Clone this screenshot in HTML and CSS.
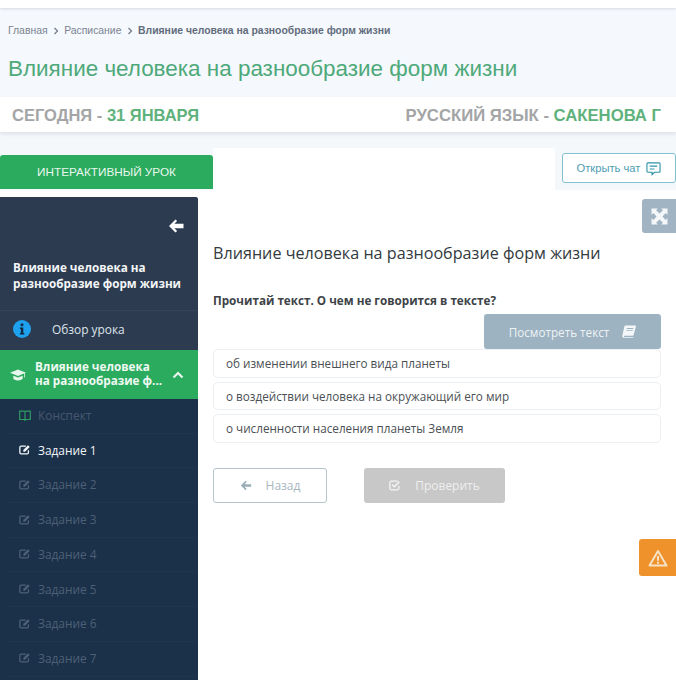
FILE: index.html
```html
<!DOCTYPE html>
<html lang="ru">
<head>
<meta charset="utf-8">
<title>Влияние человека на разнообразие форм жизни</title>
<link rel="stylesheet" href="styles.css">
</head>
<body>
<div class="page">
  <div class="topbar"></div>
  <header class="head">
    <nav class="crumbs">
      <span>Главная</span>
      <svg class="chev" viewBox="0 0 6 8"><path d="M1.500 1l3 3-3 3" fill="none" stroke="#6f7a88" stroke-width="1.200"/></svg>
      <span>Расписание</span>
      <svg class="chev" viewBox="0 0 6 8"><path d="M1.500 1l3 3-3 3" fill="none" stroke="#6f7a88" stroke-width="1.200"/></svg>
      <b>Влияние человека на разнообразие форм жизни</b>
    </nav>
    <h1 class="title">Влияние человека на разнообразие форм жизни</h1>
  </header>
  <section class="today">
    <div>СЕГОДНЯ - <em>31 ЯНВАРЯ</em></div>
    <div class="subject">РУССКИЙ ЯЗЫК - <em>САКЕНОВА Г</em></div>
  </section>
  <div class="tabs">
    <div class="tab">ИНТЕРАКТИВНЫЙ УРОК</div>
    <div class="tabfill"></div>
    <div class="chatcell">
      <button class="chat">Открыть чат
        <svg class="chaticon" viewBox="0 0 16 16"><path d="M2 2h12a1 1 0 0 1 1 1v8a1 1 0 0 1-1 1H9l-2.500 2.500V12H2a1 1 0 0 1-1-1V3a1 1 0 0 1 1-1z" fill="none" stroke="#2f93a8" stroke-width="1.200"/><path d="M4 5.500h8M4 8.500h5" stroke="#2f93a8" stroke-width="1.200"/></svg>
      </button>
    </div>
  </div>
  <div class="body">
    <aside class="side">
      <div class="sidehead">
        <div class="backrow">
          <svg class="back" viewBox="0 0 16 14"><path d="M7.500 0.500L1 7l6.500 6.500 1.600-1.600L6.400 9.200H15.500V4.800H6.400l2.700-2.700z" fill="#fff"/></svg>
        </div>
        <div class="sidetitle">Влияние человека на разнообразие форм жизни</div>
      </div>
      <div class="overview">
        <svg class="info" viewBox="0 0 18 18"><circle cx="9" cy="9" r="9" fill="#1ea1ee"/><path d="M9 3.200a1.500 1.500 0 1 1 0 3 1.500 1.500 0 0 1 0-3zM6.900 7.600h3.400v5.400h1v1.500H6.900V13h1v-3.900h-1z" fill="#14293f"/></svg>
        <span>Обзор урока</span>
      </div>
      <div class="active">
        <svg class="cap" viewBox="0 0 16 12"><path d="M8 0.500L0 3.700l8 3.200 6-2.400v4h.8V4.200l1.200-.5zM3.300 6.700v2.900c0 .6 2 1.900 4.700 1.900s4.700-1.300 4.700-1.900V6.700L8 8.500z" fill="#e8f7ee"/></svg>
        <div class="activetext">Влияние человека<br>на разнообразие ф...</div>
        <svg class="up" viewBox="0 0 12 8"><path d="M1.500 6.500L6 2l4.500 4.500" fill="none" stroke="#e9f7ee" stroke-width="2.200"/></svg>
      </div>
      <ul class="items">
        <li class="item green">
          <svg class="ico" viewBox="0 0 12 11"><path d="M.7 1.200h4.300l1 .6 1-.6h4.300v8.300H7l-1 .7-1-.7H.7zM6 1.800v8.400" fill="none" stroke="#2f9c62" stroke-width="1.200"/></svg>
          <span>Конспект</span>
        </li>
        <li class="item on">
          <svg class="ico" viewBox="0 0 14 12"><path d="M11 7v2.500a1.500 1.500 0 0 1-1.500 1.500h-7A1.500 1.500 0 0 1 1 9.500v-6A1.500 1.500 0 0 1 2.500 2H8" fill="none" stroke="currentColor" stroke-width="1.500"/><path d="M5 6.500L10.500 1l2 2L7 8.500H5z" fill="currentColor"/></svg>
          <span>Задание 1</span>
        </li>
        <li class="item">
          <svg class="ico" viewBox="0 0 14 12"><path d="M11 7v2.500a1.500 1.500 0 0 1-1.500 1.500h-7A1.500 1.500 0 0 1 1 9.500v-6A1.500 1.500 0 0 1 2.500 2H8" fill="none" stroke="currentColor" stroke-width="1.500"/><path d="M5 6.500L10.500 1l2 2L7 8.500H5z" fill="currentColor"/></svg>
          <span>Задание 2</span>
        </li>
        <li class="item">
          <svg class="ico" viewBox="0 0 14 12"><path d="M11 7v2.500a1.500 1.500 0 0 1-1.500 1.500h-7A1.500 1.500 0 0 1 1 9.500v-6A1.500 1.500 0 0 1 2.500 2H8" fill="none" stroke="currentColor" stroke-width="1.500"/><path d="M5 6.500L10.500 1l2 2L7 8.500H5z" fill="currentColor"/></svg>
          <span>Задание 3</span>
        </li>
        <li class="item">
          <svg class="ico" viewBox="0 0 14 12"><path d="M11 7v2.500a1.500 1.500 0 0 1-1.500 1.500h-7A1.500 1.500 0 0 1 1 9.500v-6A1.500 1.500 0 0 1 2.500 2H8" fill="none" stroke="currentColor" stroke-width="1.500"/><path d="M5 6.500L10.500 1l2 2L7 8.500H5z" fill="currentColor"/></svg>
          <span>Задание 4</span>
        </li>
        <li class="item">
          <svg class="ico" viewBox="0 0 14 12"><path d="M11 7v2.500a1.500 1.500 0 0 1-1.500 1.500h-7A1.500 1.500 0 0 1 1 9.500v-6A1.500 1.500 0 0 1 2.500 2H8" fill="none" stroke="currentColor" stroke-width="1.500"/><path d="M5 6.500L10.500 1l2 2L7 8.500H5z" fill="currentColor"/></svg>
          <span>Задание 5</span>
        </li>
        <li class="item">
          <svg class="ico" viewBox="0 0 14 12"><path d="M11 7v2.500a1.500 1.500 0 0 1-1.500 1.500h-7A1.500 1.500 0 0 1 1 9.500v-6A1.500 1.500 0 0 1 2.500 2H8" fill="none" stroke="currentColor" stroke-width="1.500"/><path d="M5 6.500L10.500 1l2 2L7 8.500H5z" fill="currentColor"/></svg>
          <span>Задание 6</span>
        </li>
        <li class="item">
          <svg class="ico" viewBox="0 0 14 12"><path d="M11 7v2.500a1.500 1.500 0 0 1-1.500 1.500h-7A1.500 1.500 0 0 1 1 9.500v-6A1.500 1.500 0 0 1 2.500 2H8" fill="none" stroke="currentColor" stroke-width="1.500"/><path d="M5 6.500L10.500 1l2 2L7 8.500H5z" fill="currentColor"/></svg>
          <span>Задание 7</span>
        </li>
      </ul>
    </aside>
    <main class="content">
      <h2 class="lesson">Влияние человека на разнообразие форм жизни</h2>
      <p class="question">Прочитай текст. О чем не говорится в тексте?</p>
      <div class="viewrow">
        <button class="view">Посмотреть текст
          <svg class="book" viewBox="0 0 14 13"><path fill-rule="evenodd" d="M3.500 0.500H13.200c.6 0 .8.400.7 1L11.600 10c-.1.500-.4.800-.9.800H2.600c-.9 0-.9 1.100 0 1.100h8.700v.9H2.200C.6 12.800 0 11.600.4 10.200L2.400 1.600c.2-.7.500-1.100 1.100-1.100zM4.800 3v.9h6.300l.2-.9zM4.300 5.200v.9h6.300l.2-.9z" fill="#f4f7f9"/></svg>
        </button>
      </div>
      <div class="answers">
        <div class="answer">об изменении внешнего вида планеты</div>
        <div class="answer">о воздействии человека на окружающий его мир</div>
        <div class="answer">о численности населения планеты Земля</div>
      </div>
      <div class="actions">
        <button class="btn prev">
          <svg class="btnicon" viewBox="0 0 14 12"><path d="M6.500 0.500L1 6l5.500 5.500 1.300-1.300L5.400 7.600H13V4.400H5.400l2.400-2.600z" fill="#9aaeb8"/></svg>
          Назад
        </button>
        <button class="btn check">
          <svg class="btnicon" viewBox="0 0 14 12"><path d="M11.500 6.500v2.800A1.700 1.700 0 0 1 9.800 11H2.700A1.700 1.700 0 0 1 1 9.300V2.700A1.700 1.700 0 0 1 2.700 1h7.600" fill="none" stroke="#f3f3f3" stroke-width="1.500"/><path d="M3.700 5l2.500 2.500L12 1.800" fill="none" stroke="#f3f3f3" stroke-width="1.800"/></svg>
          Проверить
        </button>
      </div>
    </main>
    <button class="expand" aria-label="Развернуть">
      <svg viewBox="0 0 16 16"><path d="M0.500 0.500h6L4.800 2.200 8 5.200l3.200-3-1.700-1.700h6v6l-1.700-1.700-3 3.200 3 3.200 1.700-1.700v6h-6l1.700-1.700-3.200-3-3.200 3 1.700 1.700h-6v-6l1.700 1.700 3-3.200-3-3.200-1.700 1.700z" fill="#f4f6f8"/></svg>
    </button>
    <button class="warn" aria-label="Предупреждение">
      <svg viewBox="0 0 20 18"><path d="M10 2L1.500 16.500h17z" fill="none" stroke="#f6e3c6" stroke-width="2" stroke-linejoin="round"/><path d="M10 7v4.800M10 12.800v2" stroke="#f6e3c6" stroke-width="2"/></svg>
    </button>
  </div>
</div>
</body>
</html>
```
FILE: styles.css
```css
* { box-sizing: border-box; }
html, body { margin: 0; padding: 0; }
body { background: #fff; font-family: "Open Sans", sans-serif; overflow: hidden; }
.page { width: 676px; height: 680px; overflow: hidden; display: flex; flex-direction: column; }
.topbar { height: 8px; background: #fff; box-shadow: 0 1px 3px rgba(120,130,150,.25); position: relative; }
.head { height: 89px; background: #f5f8fc; padding: 17px 8px 0; }
.crumbs { display: flex; align-items: center; font: 10.400px/12px "Liberation Sans", sans-serif; color: #7b8491; height: 12px; }
.crumbs b { color: #626c7d; }
.chev { width: 6px; height: 8px; margin: 0 5.300px 0 5.300px; }
.title { margin: 19px 0 0; font: 400 22.450px/26px "Liberation Sans", sans-serif; color: #4ea97a; }
.today { height: 35px; background: #fff; display: flex; justify-content: space-between; align-items: center; padding: 0 15px 0 12px; font: 700 16.500px/20px "Liberation Sans", sans-serif; color: #a3a5a6; box-shadow: 0 2px 4px rgba(120,130,150,.2); position: relative; }
.today em { font-style: normal; color: #5fb27c; }
.subject { font-size: 16.700px; padding-top: 2px; }
.tabs { height: 58px; background: #f5f8fb; display: flex; align-items: flex-end; padding-top: 16px; }
.tab { width: 213px; height: 34px; background: #2bab5e; color: #e9f7ee; border-radius: 3px 3px 0 0; font: 11.750px/34px "Liberation Sans", sans-serif; text-align: center; margin-bottom: 1px; }
.tabfill { width: 342px; height: 42px; background: #fff; border-radius: 0 3px 0 0; }
.chatcell { flex: 1; height: 42px; display: flex; justify-content: flex-end; padding-top: 5px; }
.chat { width: 114px; height: 30px; background: #fff; border: 1px solid #7fc1d1; border-radius: 3px; color: #4d9db2; font: 11.200px "Liberation Sans", sans-serif; display: flex; align-items: center; justify-content: center; gap: 6px; padding: 0; }
.chaticon { width: 15px; height: 15px; }
.body { flex: 1; display: flex; position: relative; background: #fff; padding-top: 7px; }
.side { width: 198px; background: #1b3049; border-radius: 0 3px 0 0; color: #fff; flex: none; }
.sidehead { height: 114px; background: #2c3b50; padding: 0 13px; border-bottom: 1px solid #354558; border-radius: 0 3px 0 0; }
.backrow { display: flex; justify-content: flex-end; padding: 22px 1px 0 0; height: 62px; }
.back { width: 16px; height: 14px; }
.sidetitle { font-weight: 700; font-size: 11.700px; line-height: 16px; color: #f3f5f7; }
.overview { height: 39px; background: #2c3b50; display: flex; align-items: center; padding: 0 13px 3px; color: #dfe4ea; font-size: 11.900px; }
.info { width: 18px; height: 18px; margin-right: 21px; flex: none; }
.active { height: 49px; background: #2bab5e; display: flex; align-items: center; padding: 0 14px 0 10px; color: #eef9f2; }
.cap { width: 16px; height: 12px; flex: none; margin-right: 9px; }
.activetext { flex: 1; font-weight: 700; font-size: 11.700px; line-height: 14px; white-space: nowrap; padding-bottom: 4px; }
.up { width: 12px; height: 8px; flex: none; }
.items { list-style: none; margin: 0; padding: 0 0 0 7px; }
.item { height: 34.700px; display: flex; align-items: center; padding: 0 0 1.500px 12px; font-size: 11.900px; color: #4d6075; border-bottom: 1px solid #1f354e; }
.item .ico { width: 12px; height: 11px; margin-right: 7px; flex: none; }
.item.on { color: #f2f5f8; }
.item.green span { color: #46596e; }
.content { flex: 1; padding: 46px 15px 0; min-width: 0; }
.lesson { margin: 0; font-weight: 400; font-size: 16.170px; line-height: 20px; color: #333a40; }
.question { margin: 29px 0 0; font-weight: 700; font-size: 11.700px; line-height: 16px; color: #3d4347; }
.viewrow { display: flex; justify-content: flex-end; margin-top: 6px; }
.view { width: 177px; height: 35px; border: 0; background: #9db3c1; color: #eef2f5; border-radius: 3px; font: 11.700px "Open Sans", sans-serif; display: flex; align-items: center; justify-content: center; gap: 13px; padding: 0; }
.book { width: 14px; height: 13px; }
.answers { display: flex; flex-direction: column; gap: 4px; }
.answer { height: 28.700px; border: 1px solid #eceff1; border-radius: 5px; padding: 0 12px; font-size: 11.700px; line-height: 26.700px; color: #4b5054; background: #fff; }
.actions { display: flex; gap: 37px; margin-top: 25px; }
.btn { width: 114px; height: 35px; border-radius: 3px; font: 12px "Open Sans", sans-serif; display: flex; align-items: center; justify-content: center; gap: 14px; padding: 0; }
.prev { border: 1px solid #b6c4cb; background: #fff; color: #a9b8c0; }
.check { width: 141px; border: 0; background: #c8c8c8; color: #eeeeee; }
.btnicon { width: 12px; height: 11px; }
.expand { position: absolute; right: 0; top: 9px; width: 34px; height: 34px; border: 0; padding: 0; background: #a0b4c3; border-radius: 3px 0 0 3px; display: flex; align-items: center; justify-content: center; }
.expand svg { width: 17px; height: 17px; }
.warn { position: absolute; right: 0; top: 349px; width: 37px; height: 37px; border: 0; padding: 0; background: #f0922b; border-radius: 3px 0 0 3px; display: flex; align-items: center; justify-content: center; }
.warn svg { width: 20px; height: 18px; }
```
